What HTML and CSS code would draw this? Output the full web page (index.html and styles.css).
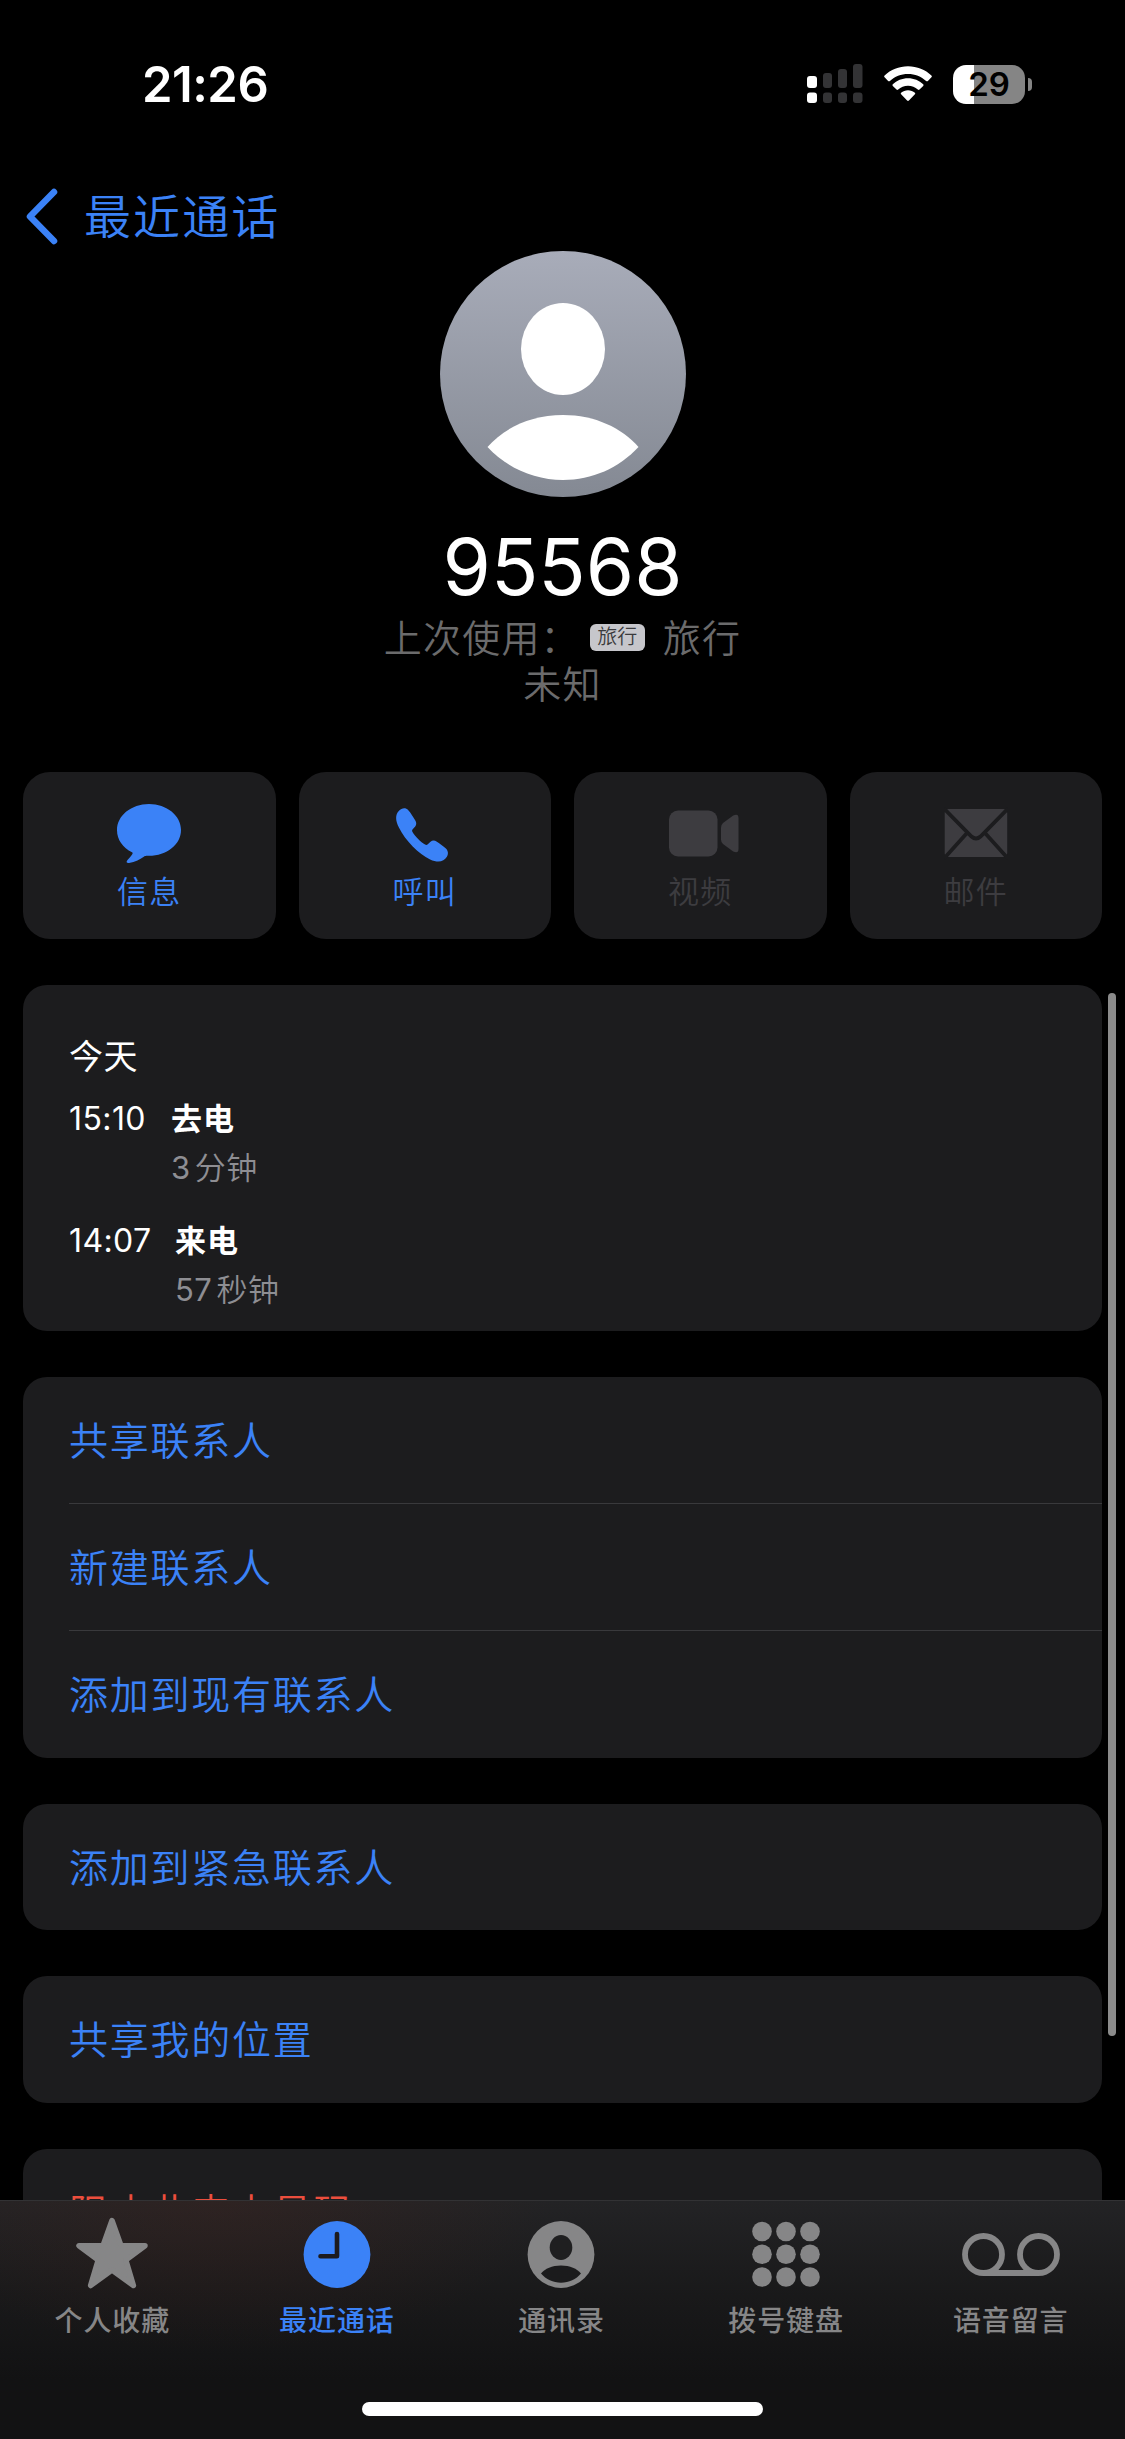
FILE: index.html
```html
<!DOCTYPE html>
<html lang="zh-CN">
<head>
<meta charset="utf-8">
<title>95568</title>
<link rel="stylesheet" href="styles.css">
</head>
<body>
<div class="phone">
  <header class="status">
    <div class="clock">21:26</div>
    <div class="indicators">
      <svg class="signal" width="56" height="40" viewBox="0 0 56 40">
        <g fill="#fff"><rect x="0" y="12" width="10" height="12" rx="3"/><rect x="0" y="28.5" width="10" height="10.5" rx="3"/></g>
        <g fill="#333335"><rect x="16" y="9" width="9" height="15" rx="3"/><rect x="31" y="5" width="9" height="19" rx="3"/><rect x="46" y="0" width="9.5" height="24" rx="3"/><rect x="16" y="28.5" width="9" height="10.5" rx="3"/><rect x="31" y="28.5" width="9" height="10.5" rx="3"/><rect x="46" y="28.5" width="9.5" height="10.5" rx="3"/></g>
      </svg>
      <svg class="wifi" width="48" height="36" viewBox="0 0 48 36">
        <g fill="#fff"><path d="M24 .3C14.900 .3 6.700 3.800 .6 9.500q-.9.900 0 1.800l3.500 3.600q.9.800 1.800 0C10.700 10.500 17 7.900 24 7.900s13.300 2.600 18.100 7q.9.800 1.800 0l3.500-3.600q.9-.9 0-1.800C41.300 3.800 33.100.3 24 .3z"/><path d="M24 12.200c-5.900 0-11.200 2.300-15.200 6q-.8.900 0 1.700l3.700 3.700q.8.700 1.700 0c2.600-2.400 6-3.800 9.800-3.800s7.200 1.400 9.800 3.800q.9.700 1.700 0l3.700-3.700q.8-.8 0-1.700c-4-3.700-9.300-6-15.200-6z"/><path d="M24 24.200c-2.600 0-5 .9-6.900 2.500q-.8.800 0 1.600l6 6.200q.9.900 1.800 0l6-6.200q.8-.8 0-1.600c-1.900-1.600-4.300-2.500-6.900-2.500z"/></g>
      </svg>
      <div class="battery"><span class="level">29</span><span class="nub"></span></div>
    </div>
  </header>

  <nav class="nav">
    <svg width="34" height="58" viewBox="0 0 34 58"><path d="M29 5 5 29.500 29 54" fill="none" stroke="#3b82f7" stroke-width="6.500" stroke-linecap="round" stroke-linejoin="round"/></svg>
    <span class="back">最近通话</span>
  </nav>

  <section class="profile">
    <svg class="avatar" width="246" height="246" viewBox="0 0 246 246">
      <defs><linearGradient id="shade" x1="0" y1="0" x2="0" y2="1"><stop offset="0" stop-color="#a8acb9"/><stop offset="1" stop-color="#848993"/></linearGradient></defs>
      <circle cx="123" cy="123" r="123" fill="url(#shade)"/>
      <ellipse cx="123" cy="98" rx="42" ry="46" fill="#fff"/>
      <path d="M47.500 196C64 177 91 164 123 164s59 13 75.500 32C179 217 152 229 123 229s-56-12-75.500-33z" fill="#fff"/>
    </svg>
    <h1 class="number">95568</h1>
    <div class="line"><span>上次使用：</span><span class="sim">旅行</span><span>旅行</span></div>
    <div class="line unknown">未知</div>
  </section>

  <section class="actions">
    <div class="action">
      <svg width="64" height="60" viewBox="0 0 64 60"><path d="M32 0C14.300 0 0 12.200 0 27.500c0 9.800 5.800 18.500 15 23.300.7.400.8 1 .4 1.800-1.200 2.200-3 4.300-4.900 6.300-1.700 1.900-.9 3.600 1.600 3.200 6-1 11.200-4 15.100-6.900 1-.7 2.200-.8 4.800-.7C49.700 54.500 64 42.500 64 27.300 64 12.200 49.700 0 32 0z" transform="scale(1 .95)" fill="#3b82f7"/></svg>
      <span>信息</span>
    </div>
    <div class="action">
      <svg width="58" height="60" viewBox="0 0 58 60"><path d="M3 6.800C5.500 4 9.500 3 12.300 6.200c2.200 2.400 4.900 6.700 7 10.200 1.600 2.800 1 4.800-.8 6.900l-2 2.300c-.6.800-.5 1.500 0 2.400 2.600 4.500 8.300 10 12.600 12.600 1 .6 1.800.5 2.700-.3l2.700-2.500c1.900-1.600 3.900-1.600 6.400-.1 2.900 1.800 6.400 4.300 9 6.700 2.400 2.200 2.600 5.600 1 8.400-3.200 5.300-9.200 6.100-16.800 2.700C22.700 50.300 9.600 37 2.900 23.600-.6 16.600-1 11 3 6.800z" fill="#3b82f7"/></svg>
      <span>呼叫</span>
    </div>
    <div class="action off">
      <svg width="62" height="60" viewBox="0 0 62 60" overflow="visible"><rect x="0" y="6.500" width="48.500" height="46" rx="9" fill="#3d3c40"/><path d="M52 23.500q0-2.500 2-4.500l10.200-7.500q5.300-2.500 5.300 2.500v31q0 5-5.300 2.500L54 40q-2-2-2-4.500z" fill="#3d3c40"/></svg>
      <span>视频</span>
    </div>
    <div class="action off">
      <svg width="64" height="60" viewBox="0 0 64 60"><rect x=".7" y="5" width="62.500" height="48" rx="4" fill="#3d3c40"/><path d="M0 4.500 27.500 32.500q4.500 4 9 0L64 4.500M0 54.500 23 29M64 54.500 41 29" fill="none" stroke="#1c1c1e" stroke-width="3.800"/></svg>
      <span>邮件</span>
    </div>
  </section>

  <section class="card history">
    <h2>今天</h2>
    <div class="call"><span class="time t1">15:10</span><div><b>去电</b><p><i>3</i>分钟</p></div></div>
    <div class="call"><span class="time t2">14:07</span><div><b>来电</b><p><i>57</i>秒钟</p></div></div>
  </section>

  <section class="card">
    <div class="row">共享联系人</div>
    <div class="row">新建联系人</div>
    <div class="row">添加到现有联系人</div>
  </section>
  <section class="card"><div class="row">添加到紧急联系人</div></section>
  <section class="card"><div class="row">共享我的位置</div></section>
  <section class="card"><div class="row danger">阻止此来电号码</div></section>

  <div class="scrollbar"></div>

  <footer class="tabbar">
    <div class="tabs">
      <div class="tab">
        <svg width="74" height="76" viewBox="0 0 74 76"><path d="M37 6.500 46 31.700H70L50.800 46 58.400 71.500 37 56 15.600 71.500 23.200 46 4 31.700H28z" fill="#868687" stroke="#868687" stroke-width="5.500" stroke-linejoin="round"/></svg>
        <span>个人收藏</span>
      </div>
      <div class="tab on">
        <svg width="68" height="76" viewBox="0 0 68 76"><circle cx="34" cy="40.500" r="33.400" fill="#3b82f7"/><path d="M34 20V42.200H17.500" fill="none" stroke="#1d1b1d" stroke-width="4.600" stroke-linecap="round" stroke-linejoin="round"/></svg>
        <span>最近通话</span>
      </div>
      <div class="tab">
        <svg width="68" height="76" viewBox="0 0 68 76"><circle cx="34" cy="40.500" r="33.400" fill="#868687"/><ellipse cx="34" cy="33.500" rx="11.300" ry="12.500" fill="#1f1f20"/><path d="M14 59.500C18 54.500 25 51.500 34 51.500s16 3 20 8C49 65.500 42 68.700 34 68.700S19 65.500 14 59.500z" fill="#1b1b1c"/></svg>
        <span>通讯录</span>
      </div>
      <div class="tab">
        <svg width="68" height="76" viewBox="0 0 68 76"><g fill="#868687"><circle cx="10" cy="17.500" r="9.800"/><circle cx="34" cy="17.500" r="9.800"/><circle cx="58" cy="17.500" r="9.800"/><circle cx="10" cy="40.300" r="9.800"/><circle cx="34" cy="40.300" r="9.800"/><circle cx="58" cy="40.300" r="9.800"/><circle cx="10" cy="63" r="9.800"/><circle cx="34" cy="63" r="9.800"/><circle cx="58" cy="63" r="9.800"/></g></svg>
        <span>拨号键盘</span>
      </div>
      <div class="tab">
        <svg width="98" height="76" viewBox="0 0 98 76"><g fill="none" stroke="#868687" stroke-width="5.800"><circle cx="21.500" cy="40.500" r="18.500"/><circle cx="76.500" cy="40.500" r="18.500"/><path d="M21.500 59H76.500"/></g></svg>
        <span>语音留言</span>
      </div>
    </div>
    <div class="home"></div>
  </footer>
</div>
</body>
</html>
```
FILE: styles.css
```css
* { box-sizing: border-box; margin: 0; padding: 0; }

body {
  background: #000;
  font-family: Inter, "Noto Sans CJK SC", sans-serif;
}

svg { display: block; }

.phone {
  position: relative;
  width: 1125px;
  height: 2439px;
  overflow: hidden;
  background: #000;
  color: #fff;
}

/* status bar */
.status {
  display: flex;
  justify-content: space-between;
  align-items: center;
  height: 168px;
  padding: 0 100px 0 142px;
}
.clock { margin-top: 1px; font-size: 49px; font-weight: 600; line-height: 60px; letter-spacing: -0.5px; }
.indicators { display: flex; align-items: center; }
.wifi { margin-left: 21px; }
.battery {
  position: relative;
  width: 72px;
  height: 39px;
  margin-left: 21px;
  border-radius: 13px;
  background: linear-gradient(90deg, #fff 21px, #858585 21px);
}
.level {
  display: block;
  text-align: center;
  font-size: 33px;
  font-weight: 600;
  line-height: 39px;
  color: #000;
}
.nub {
  position: absolute;
  left: 75px;
  top: 13px;
  width: 4px;
  height: 13px;
  border-radius: 0 5px 5px 0;
  background: #858585;
}

/* back link */
.nav {
  display: flex;
  align-items: center;
  gap: 25px;
  height: 83px;
  padding: 0 0 0 25px;
}
.nav svg { margin-top: 12px; }
.back { margin-top: 15px; font-size: 47px; font-weight: 350; line-height: 60px; letter-spacing: 2.1px; color: #3b82f7; }

/* contact header */
.profile { display: flex; flex-direction: column; align-items: center; height: 521px; }
.number { margin-top: 20px; font-size: 78px; font-weight: 400; line-height: 100px; }
.line {
  display: flex;
  align-items: center;
  height: 46px;
  font-size: 38px;
  font-weight: 350;
  letter-spacing: 1.2px;
  color: #6b6b6c;
}
.line:not(.unknown) { margin-top: -5px; }
.sim {
  width: 55px;
  height: 27px;
  margin: 4px 18px 0 10px;
  border-radius: 6px;
  background: #c6c6cb;
  color: #3a3a3c;
  font-size: 20px;
  line-height: 27px;
  letter-spacing: 0;
  text-align: center;
}

/* quick actions */
.actions { display: grid; grid-template-columns: repeat(4, 1fr); gap: 23px; margin: 0 23px; }
.action {
  display: flex;
  flex-direction: column;
  align-items: center;
  gap: 6px;
  height: 167px;
  padding-top: 32px;
  border-radius: 27px;
  background: #1c1c1e;
  color: #3b82f7;
}
.action span { font-size: 31px; font-weight: 350; line-height: 44px; letter-spacing: 1.2px; }
.action.off { color: #3d3c40; }

/* cards */
.card {
  margin: 46px 23px 0;
  border-radius: 24px;
  background: #1c1c1e;
}
.history { height: 346px; padding: 47px 46px 0; }
.history h2 { height: 50px; font-size: 34px; font-weight: 400; line-height: 50px; letter-spacing: 0.5px; }
.call { display: flex; height: 122px; font-size: 31px; line-height: 49px; }
.call:nth-of-type(1) { margin-top: 12px; }
.time { font-size: 32px; letter-spacing: 0.4px; }
.t1 { width: 102px; }
.t2 { width: 106px; }
.call b { display: block; font-weight: 700; letter-spacing: 1px; }
.call p { color: #8e8e93; font-weight: 350; letter-spacing: 0.5px; }
.call i { margin-right: 4px; font-style: normal; font-weight: 400; }
.row {
  height: 127px;
  margin-left: 46px;
  border-bottom: 1px solid #39393c;
  font-size: 39px;
  font-weight: 350;
  line-height: 127px;
  letter-spacing: 1.75px;
  color: #3b82f7;
}
.row:last-child { height: 126.5px; border-bottom: 0; }
.row.danger { color: #eb4e3d; }

.scrollbar {
  position: absolute;
  right: 9px;
  top: 993px;
  width: 8px;
  height: 1043px;
  border-radius: 4px;
  background: #8b8b8b;
}

/* tab bar */
.tabbar {
  position: absolute;
  left: 0;
  right: 0;
  bottom: 0;
  height: 239px;
  border-top: 1px solid #323234;
  background:
    radial-gradient(ellipse 330px 150px at 220px 0, rgba(70, 35, 28, .32), rgba(70, 35, 28, 0)),
    linear-gradient(#232325, #19191a 40%, #121213 75%);
}
.tabs { display: grid; grid-template-columns: repeat(5, 1fr); padding: 13px 2px 0 0; height: 200px; }
.tab { display: flex; flex-direction: column; align-items: center; color: #868687; }
.tab span { margin-top: 11px; font-size: 28px; font-weight: 500; line-height: 40px; letter-spacing: 0.9px; }
.tab.on { color: #3b82f7; }
.home { width: 401px; height: 14px; margin: 1px auto 0; border-radius: 7px; background: #fff; }
```
